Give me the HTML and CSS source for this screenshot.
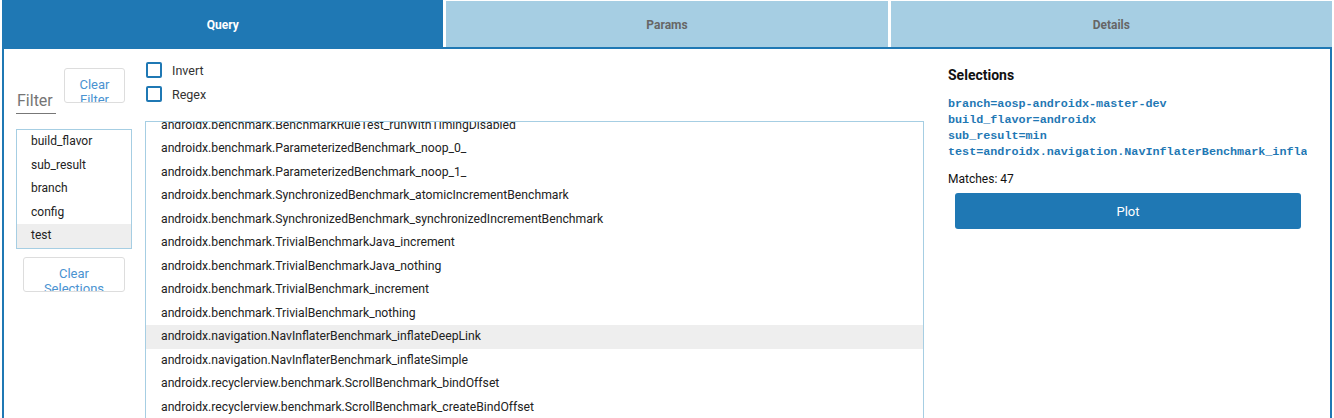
FILE: index.html
```html
<!DOCTYPE html>
<html>
<head>
<meta charset="utf-8">
<title>Query</title>
<link rel="stylesheet" href="styles.css">
</head>
<body>
<div class="tabs">
  <div class="tab active">Query</div>
  <div class="tab">Params</div>
  <div class="tab">Details</div>
</div>
<div class="panel">
  <div class="col-keys">
    <div class="filter-row">
      <input class="filter-input" type="text" placeholder="Filter">
      <button class="btn-light btn-filter">Clear Filter</button>
    </div>
    <ul class="key-list">
      <li>build_flavor</li>
      <li>sub_result</li>
      <li>branch</li>
      <li>config</li>
      <li class="selected">test</li>
    </ul>
    <button class="btn-light btn-sel">Clear Selections</button>
  </div>
  <div class="col-values">
    <label class="check"><span class="box"></span>Invert</label>
    <label class="check"><span class="box"></span>Regex</label>
    <div class="value-list">
      <ul class="rows">
        <li>androidx.benchmark.BenchmarkRuleTest_runWithTimingDisabled</li>
        <li>androidx.benchmark.ParameterizedBenchmark_noop_0_</li>
        <li>androidx.benchmark.ParameterizedBenchmark_noop_1_</li>
        <li>androidx.benchmark.SynchronizedBenchmark_atomicIncrementBenchmark</li>
        <li>androidx.benchmark.SynchronizedBenchmark_synchronizedIncrementBenchmark</li>
        <li>androidx.benchmark.TrivialBenchmarkJava_increment</li>
        <li>androidx.benchmark.TrivialBenchmarkJava_nothing</li>
        <li>androidx.benchmark.TrivialBenchmark_increment</li>
        <li>androidx.benchmark.TrivialBenchmark_nothing</li>
        <li class="selected">androidx.navigation.NavInflaterBenchmark_inflateDeepLink</li>
        <li>androidx.navigation.NavInflaterBenchmark_inflateSimple</li>
        <li>androidx.recyclerview.benchmark.ScrollBenchmark_bindOffset</li>
        <li>androidx.recyclerview.benchmark.ScrollBenchmark_createBindOffset</li>
        <li>androidx.recyclerview.benchmark.ScrollBenchmark_offset</li>
        <li>androidx.recyclerview.benchmark.ScrollBenchmark_createOffset</li>
      </ul>
    </div>
  </div>
  <div class="col-summary">
    <div class="heading">Selections</div>
    <div class="query">
      <div>branch=aosp-androidx-master-dev</div>
      <div>build_flavor=androidx</div>
      <div>sub_result=min</div>
      <div>test=androidx.navigation.NavInflaterBenchmark_inflateDeepLink</div>
    </div>
    <div class="matches">Matches: 47</div>
    <button class="btn-plot">Plot</button>
  </div>
</div>
</body>
</html>
```
FILE: styles.css
```css
html, body {
  margin: 0;
  padding: 0;
  background: #fff;
  overflow: hidden;
}
body {
  font-family: Roboto, "Liberation Sans", sans-serif;
  color: #222;
  width: 1334px;
  height: 418px;
}
.tabs {
  display: flex;
  gap: 3px;
  padding: 0 2px;
  height: 47px;
}
.tab {
  flex: 1;
  margin-top: 1px;
  background: #a6cee3;
  color: #666;
  font-size: 12px;
  font-weight: bold;
  display: flex;
  align-items: center;
  justify-content: center;
  padding-top: 1px;
}
.tab.active {
  margin-top: 0;
  padding-top: 2px;
  background: #1f78b4;
  color: #fff;
}
.panel {
  margin: 0 2px;
  border: 2px solid #1f78b4;
  height: 420px;
  display: flex;
  padding-left: 12px;
}
.col-keys {
  width: 116px;
  padding-top: 19px;
  display: flex;
  flex-direction: column;
  align-items: center;
}
.filter-row {
  align-self: stretch;
  display: flex;
  align-items: flex-start;
  gap: 8px;
}
.filter-input {
  width: 39px;
  height: 20px;
  margin-top: 22px;
  padding: 0 0 3px 1px;
  border: none;
  border-bottom: 1px solid #777;
  font-family: Roboto, "Liberation Sans", sans-serif;
  font-size: 16px;
  outline: none;
  background: transparent;
  box-sizing: content-box;
}
.filter-input::placeholder {
  color: #757575;
  opacity: 1;
}
.btn-light {
  background: #fff;
  border: 1px solid #ddd;
  border-radius: 3px;
  color: #4a93d1;
  font-family: Roboto, "Liberation Sans", sans-serif;
  font-size: 13px;
  line-height: 15px;
  overflow: hidden;
  padding: 8px 8px 0;
  box-sizing: border-box;
  text-align: center;
}
.btn-filter {
  width: 61px;
  height: 35px;
}
.key-list {
  list-style: none;
  margin: 15px 0 0;
  padding: 0;
  align-self: stretch;
  border: 1px solid #a6cee3;
}
.key-list li {
  height: 23.5px;
  line-height: 23.5px;
  padding-left: 14px;
  font-size: 12px;
  color: #222;
}
.key-list li.selected,
.rows li.selected {
  background: #eeeeee;
}
.btn-sel {
  margin-top: 8px;
  width: 102px;
  height: 35px;
}
.col-values {
  width: 779px;
  margin-left: 13px;
  padding-top: 9px;
  display: flex;
  flex-direction: column;
}
.check {
  height: 24px;
  display: flex;
  align-items: center;
  gap: 10px;
  font-size: 12.5px;
  color: #333;
  padding-left: 1px;
}
.box {
  width: 16px;
  height: 16px;
  box-sizing: border-box;
  border: 2px solid #1f78b4;
  border-radius: 2px;
}
.value-list {
  margin-top: 15px;
  border: 1px solid #a6cee3;
  height: 330px;
  overflow: hidden;
}
.rows {
  list-style: none;
  margin: -8.5px 0 0;
  padding: 0;
}
.rows li {
  height: 23.5px;
  line-height: 23.5px;
  padding-left: 15px;
  font-size: 12.2px;
  color: #222;
  white-space: nowrap;
}
.col-summary {
  width: 359px;
  margin-left: 24px;
  padding-top: 18px;
  display: flex;
  flex-direction: column;
}
.heading {
  font-size: 14px;
  font-weight: bold;
  line-height: 16px;
  color: #111;
}
.query {
  margin-top: 13px;
  font-family: "Liberation Mono", monospace;
  font-size: 11.75px;
  font-weight: bold;
  line-height: 16px;
  color: #1f78b4;
  white-space: nowrap;
  overflow: hidden;
}
.matches {
  margin-top: 11px;
  font-size: 12px;
  line-height: 16px;
  color: #111;
}
.btn-plot {
  margin: 6px 6px 0 7px;
  height: 36px;
  border: none;
  border-radius: 3px;
  background: #1f78b4;
  color: #fff;
  font-family: Roboto, "Liberation Sans", sans-serif;
  font-size: 13px;
}
```
